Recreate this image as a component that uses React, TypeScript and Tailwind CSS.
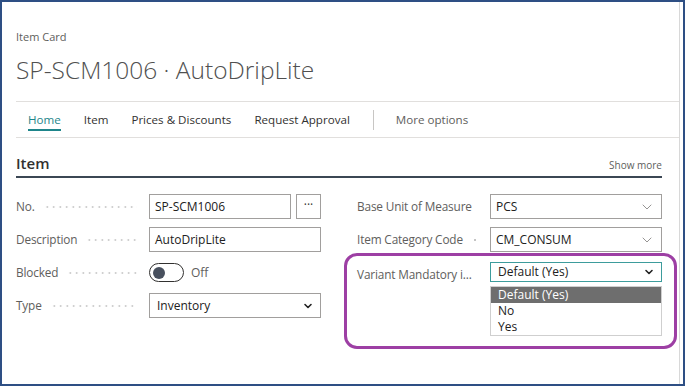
import { ChevronDown } from 'lucide-react';

const Leader = () => (
  <div className="flex-1 mx-[9px] h-[2px] bg-[radial-gradient(circle,#c4c4c4_0.9px,transparent_1.1px)] bg-[length:6.5px_2px] bg-repeat-x" />
);

const Label = ({ text }: { text: string }) => (
  <div className="w-[133px] flex items-center pr-[3px] min-w-0">
    <span className="text-[#605e5c] text-[11.8px] tracking-[-0.15px] whitespace-nowrap">{text}</span>
    <Leader />
  </div>
);

const TextBox = ({ value, className = '' }: { value: string; className?: string }) => (
  <div className={`h-[25px] border border-[#a19f9d] flex items-center px-[5px] text-[12px] text-[#212121] ${className}`}>
    {value}
  </div>
);

const LookupBox = ({ value }: { value: string }) => (
  <div className="w-[172px] h-[25px] border border-[#a19f9d] flex items-center justify-between pl-[5px] pr-[6px] text-[12px] text-[#212121]">
    <span>{value}</span>
    <ChevronDown size={16} strokeWidth={1} className="text-[#605e5c]" />
  </div>
);

const SelectBox = ({ value, focused = false }: { value: string; focused?: boolean }) => (
  <div
    className={`w-[172px] h-[25px] border flex items-center justify-between pl-[7px] pr-[6px] text-[12px] text-[#212121] ${
      focused ? 'border-[#3d9c9c]' : 'border-[#a19f9d]'
    }`}
  >
    <span>{value}</span>
    <ChevronDown size={12} strokeWidth={3.2} className="text-[#222]" />
  </div>
);

const tabs = ['Home', 'Item', 'Prices & Discounts', 'Request Approval'];

export default function App() {
  return (
    <div className="relative w-[685px] h-[386px] overflow-hidden border-2 border-[#2e4f84] bg-white font-['Open_Sans',sans-serif]">
      <div className="h-full mr-[3px] border-r border-[#d8d8d8] pl-[14px]">
        <div className="pt-[27px] text-[11px] leading-[16px] text-[#605e5c]">Item Card</div>
        <div className="mt-[7px] text-[24.5px] leading-[36px] font-light text-[#505050]">SP-SCM1006 · AutoDripLite</div>

        <div className="mt-[13px] h-[37px] border-y border-[#e1dfdd] flex items-center pl-[12px] text-[11.6px] text-[#323130]">
          {tabs.map((t, i) => (
            <div key={t} className={`relative mr-[23px] ${i === 0 ? 'text-[#1e858a]' : ''}`}>
              {t}
              {i === 0 && <div className="absolute left-0 right-0 -bottom-[3px] h-[2px] bg-[#1e858a]" />}
            </div>
          ))}
          <div className="w-px h-[20px] bg-[#c8c6c4] mr-[22px]" />
          <div className="text-[#605e5c]">More options</div>
        </div>

        <div className="pr-[17px]">
          <div className="mt-[15px] pb-[3px] border-b-2 border-[#3b4754] flex items-end justify-between">
            <div className="text-[15px] leading-[20px] font-semibold text-[#323130]">Item</div>
            <div className="text-[10px] leading-[16px] text-[#605e5c]">Show more</div>
          </div>

          <div className="mt-[16px] flex gap-[36px]">
            <div className="w-[305px] flex flex-col gap-[8px]">
              <div className="flex h-[25px]">
                <Label text="No." />
                <TextBox value="SP-SCM1006" className="w-[142px]" />
                <div className="ml-[5px] w-[25px] h-[25px] border border-[#a19f9d] flex items-center justify-center text-[#323130] text-[12px] leading-none pb-[4px]">
                  ···
                </div>
              </div>
              <div className="flex h-[25px]">
                <Label text="Description" />
                <TextBox value="AutoDripLite" className="w-[172px]" />
              </div>
              <div className="flex h-[25px]">
                <Label text="Blocked" />
                <div className="flex items-center">
                  <div className="w-[35px] h-[19px] rounded-full border border-[#323130] flex items-center pl-[3px]">
                    <div className="w-[12px] h-[12px] rounded-full bg-[#48505e]" />
                  </div>
                  <span className="ml-[7px] text-[12px] text-[#605e5c]">Off</span>
                </div>
              </div>
              <div className="flex h-[25px]">
                <Label text="Type" />
                <SelectBox value="Inventory" />
              </div>
            </div>

            <div className="w-[305px] flex flex-col gap-[8px]">
              <div className="flex h-[25px]">
                <Label text="Base Unit of Measure" />
                <LookupBox value="PCS" />
              </div>
              <div className="flex h-[25px]">
                <Label text="Item Category Code" />
                <LookupBox value="CM_CONSUM" />
              </div>
              <div className="flex h-[25px] mt-[2px]">
                <Label text="Variant Mandatory i..." />
                <div className="flex flex-col">
                  <SelectBox value="Default (Yes)" focused />
                  <div className="mt-[4px] w-[172px] border border-[#cfcfcf] text-[12px] leading-[16px] text-[#212121]">
                    <div className="bg-[#6e6e6e] text-white pl-[7px]">Default (Yes)</div>
                    <div className="pl-[7px]">No</div>
                    <div className="pl-[7px]">Yes</div>
                  </div>
                </div>
              </div>
            </div>
          </div>
        </div>
      </div>

      <div className="absolute left-[342px] top-[251px] w-[333px] h-[96px] rounded-[13px] border-[3px] border-[#9d3fa4]" />
    </div>
  );
}
